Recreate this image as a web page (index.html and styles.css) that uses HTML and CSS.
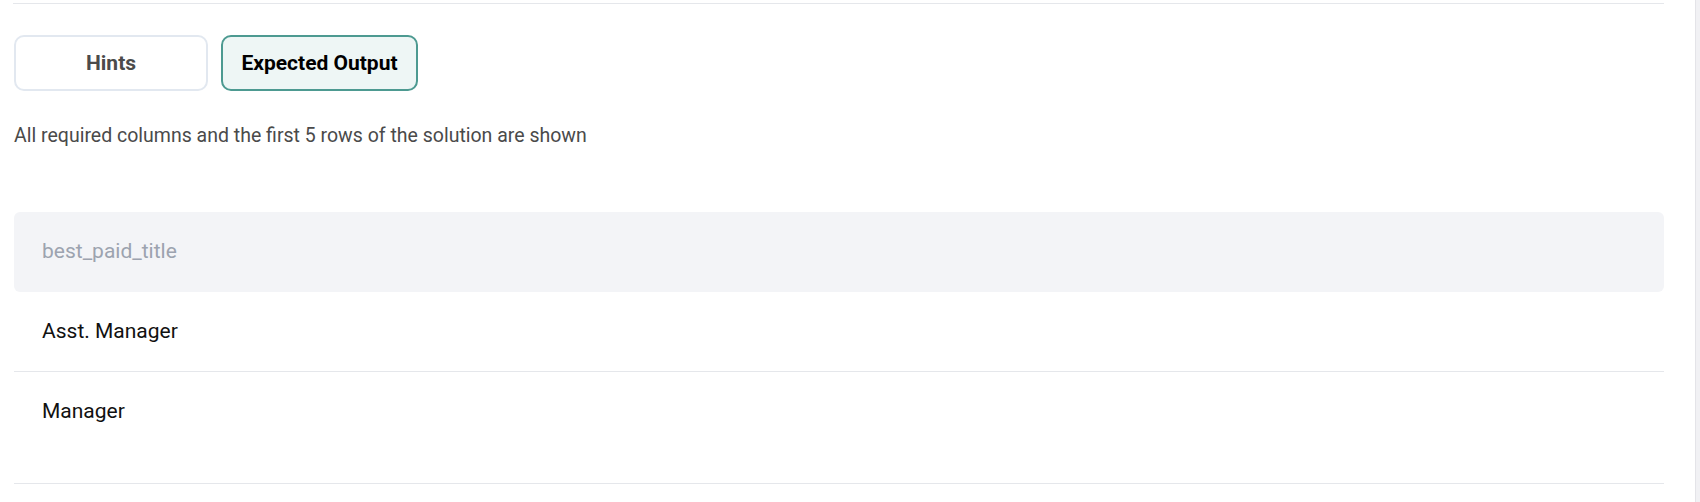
FILE: index.html
```html
<!DOCTYPE html>
<html lang="en">
<head>
<meta charset="utf-8">
<title>Expected Output</title>
<link rel="stylesheet" href="styles.css">
</head>
<body>
<div class="page">
  <main class="main">
    <div class="top-rule"></div>
    <div class="tabs">
      <button class="tab">Hints</button>
      <button class="tab tab-active">Expected Output</button>
    </div>
    <p class="note">All required columns and the first 5 rows of the solution are shown</p>
    <div class="table">
      <div class="thead">best_paid_title</div>
      <div class="row">Asst. Manager</div>
      <div class="row row-last">Manager</div>
    </div>
  </main>
  <div class="scrollbar"></div>
</div>
</body>
</html>
```
FILE: styles.css
```css
html, body {
  margin: 0;
  padding: 0;
  background: #ffffff;
}
body {
  font-family: Roboto, "Liberation Sans", Arial, sans-serif;
  color: #111111;
}
.page {
  display: flex;
  height: 502px;
  overflow: hidden;
}
.main {
  flex: 1;
  padding: 3px 31px 0 14px;
}
.top-rule {
  border-top: 1px solid #e5e7eb;
  margin-left: -1px;
}
.tabs {
  display: flex;
  gap: 13px;
  margin-top: 31px;
}
.tab {
  font-family: inherit;
  font-size: 21px;
  font-weight: 700;
  height: 56px;
  border-radius: 10px;
  border: 2px solid #e2e8f0;
  background: #ffffff;
  color: #4b4b4b;
  cursor: pointer;
  width: 194px;
  padding: 0;
}
.tab-active {
  width: 197px;
  border: 2.5px solid #4d9a91;
  background: #eef6f5;
  color: #000000;
}
.note {
  margin: 31px 0 0;
  font-size: 19.5px;
  line-height: 28px;
  color: #4a4a4a;
}
.table {
  margin-top: 62px;
}
.thead {
  background: #f3f4f7;
  border-radius: 6px;
  height: 80px;
  box-sizing: border-box;
  padding: 25px 28px 0;
  font-size: 21px;
  line-height: 28px;
  color: #9ca3af;
}
.row {
  height: 80px;
  box-sizing: border-box;
  padding: 25px 28px 0;
  font-size: 21px;
  line-height: 28px;
  color: #111111;
  border-bottom: 1px solid #e5e7eb;
}
.row-last {
  height: 112px;
}
.scrollbar {
  width: 4px;
  flex: none;
  background: #f1f1f4;
  border-left: 1px solid #e4e4e8;
}
```
